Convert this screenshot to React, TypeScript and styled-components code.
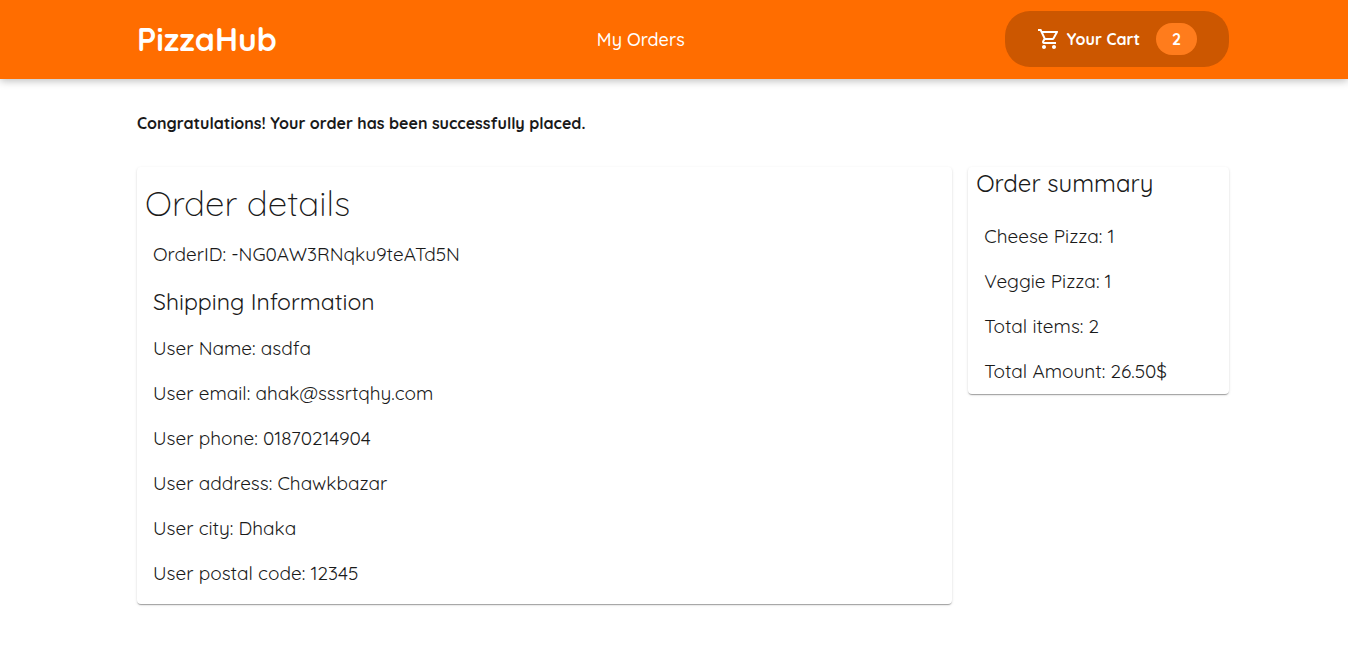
import React from "react";
import styled, { createGlobalStyle } from "styled-components";
import { MdOutlineShoppingCart } from "react-icons/md";

const GlobalStyle = createGlobalStyle`
  *, *::before, *::after { box-sizing: border-box; }
  body {
    margin: 0;
    background: #fff;
    color: #1a1a1a;
    font-family: Quicksand, Lato, "Open Sans", sans-serif;
  }
`;

const Header = styled.header`
  display: flex;
  align-items: center;
  justify-content: space-between;
  padding: 11px 119px 12px 137px;
  background: #ff6d00;
  color: #fff;
  box-shadow: 0 2px 8px rgba(0, 0, 0, 0.26);
`;

const Brand = styled.a`
  color: inherit;
  font-size: 32px;
  line-height: 40px;
  font-weight: 700;
  text-decoration: none;
`;

const NavLink = styled.a`
  padding-top: 2px;
  color: inherit;
  font-size: 18px;
  line-height: 24px;
  font-weight: 500;
  text-decoration: none;
`;

const CartButton = styled.button`
  display: flex;
  align-items: center;
  height: 56px;
  padding: 0 32px;
  border: 0;
  border-radius: 25px;
  background: #cc5700;
  color: #fff;
  font: inherit;
  font-size: 16px;
  font-weight: 700;
  cursor: pointer;

  svg { width: 24px; height: 24px; margin-right: 6px; }
`;

const CartCount = styled.span`
  min-width: 41px;
  margin-left: 16px;
  border-radius: 16px;
  background: #ff7c1c;
  line-height: 32px;
  text-align: center;
`;

const Main = styled.main`
  padding: 32px 119px 44px 137px;
`;

const Notice = styled.p`
  margin: 0 0 31px;
  font-size: 16px;
  line-height: 25px;
  font-weight: 700;
`;

const Columns = styled.div`
  display: grid;
  grid-template-columns: minmax(0, 816fr) minmax(0, 261fr);
  align-items: start;
  gap: 16px;
`;

const Card = styled.section<{ $top: number; $bottom: number }>`
  padding: ${(p) => p.$top}px 8px ${(p) => p.$bottom}px;
  border-radius: 4px;
  background: #fff;
  box-shadow:
    0 2px 1px -1px rgba(0, 0, 0, 0.2),
    0 1px 1px rgba(0, 0, 0, 0.14),
    0 1px 3px rgba(0, 0, 0, 0.12);
`;

const DetailsTitle = styled.h1`
  margin: 0 0 9px;
  font-size: 35px;
  line-height: 40px;
  font-weight: 300;
`;

const SummaryTitle = styled.h2`
  margin: 0 0 15px;
  font-size: 24px;
  line-height: 32px;
  font-weight: 400;
`;

const ShippingTitle = styled.h2`
  margin: 0;
  padding: 8px;
  font-size: 23px;
  line-height: 33px;
  font-weight: 400;
`;

const Line = styled.p`
  margin: 0;
  padding: 8px;
  font-size: 19px;
  line-height: 29px;
  font-weight: 400;
  overflow-wrap: anywhere;
`;

const shipping = [
  ["User Name", "asdfa"],
  ["User email", "ahak@sssrtqhy.com"],
  ["User phone", "01870214904"],
  ["User address", "Chawkbazar"],
  ["User city", "Dhaka"],
  ["User postal code", "12345"],
];

const summary = [
  ["Cheese Pizza", "1"],
  ["Veggie Pizza", "1"],
  ["Total items", "2"],
  ["Total Amount", "26.50$"],
];

export default function App() {
  return (
    <>
      <GlobalStyle />
      <Header>
        <Brand href="#home">PizzaHub</Brand>
        <NavLink href="#orders">My Orders</NavLink>
        <CartButton type="button">
          <MdOutlineShoppingCart aria-hidden="true" />
          Your Cart
          <CartCount>2</CartCount>
        </CartButton>
      </Header>
      <Main>
        <Notice>Congratulations! Your order has been successfully placed.</Notice>
        <Columns>
          <Card $top={16} $bottom={8}>
            <DetailsTitle>Order details</DetailsTitle>
            <Line>OrderID: -NG0AW3RNqku9teATd5N</Line>
            <ShippingTitle>Shipping Information</ShippingTitle>
            {shipping.map(([label, value]) => (
              <Line key={label}>{`${label}: ${value}`}</Line>
            ))}
          </Card>
          <Card $top={0} $bottom={0}>
            <SummaryTitle>Order summary</SummaryTitle>
            {summary.map(([label, value]) => (
              <Line key={label}>{`${label}: ${value}`}</Line>
            ))}
          </Card>
        </Columns>
      </Main>
    </>
  );
}
